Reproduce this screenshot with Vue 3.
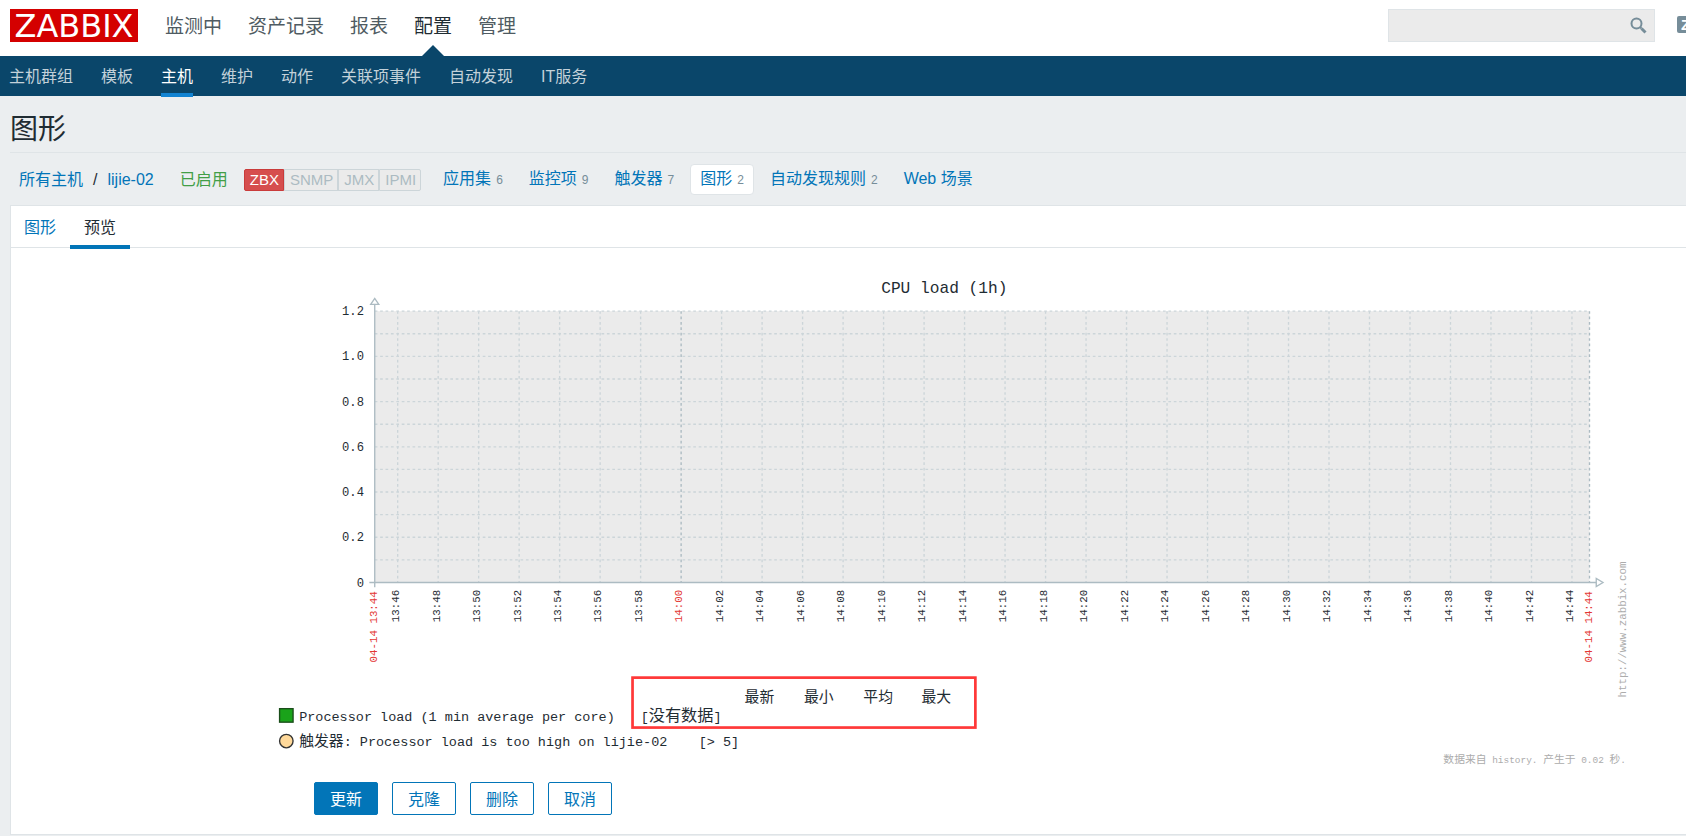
<script setup>
import { ref } from 'vue'

const query = ref('')
const mainMenu = ['监测中', '资产记录', '报表', '配置', '管理']
const subMenu = ['主机群组', '模板', '主机', '维护', '动作', '关联项事件', '自动发现', 'IT服务']
const interfaces = ['ZBX', 'SNMP', 'JMX', 'IPMI']
const hostLinks = [
  { name: '应用集', count: 6 },
  { name: '监控项', count: 9 },
  { name: '触发器', count: 7 },
  { name: '图形', count: 2, active: true },
  { name: '自动发现规则', count: 2 },
  { name: 'Web 场景' }
]
const actions = ['更新', '克隆', '删除', '取消']

const plot = { left: 85, right: 985, top: 30.5, bottom: 231.5 }
const rowStep = (plot.bottom - plot.top) / 12
const rows = Array.from({ length: 12 }, (_, i) => plot.top + i * rowStep)
const yLabels = ['1.2', '1.0', '0.8', '0.6', '0.4', '0.2', '0'].map((text, i) => ({
  text,
  y: plot.top + i * 2 * rowStep + 3
}))
const ticks = Array.from({ length: 30 }, (_, i) => {
  const minutes = 13 * 60 + 46 + i * 2
  const text = `${Math.floor(minutes / 60)}:${String(minutes % 60).padStart(2, '0')}`
  return { text, x: 102 + i * 30, major: minutes % 60 === 0 }
})
const edges = [
  { text: '04-14 13:44', x: plot.left },
  { text: '04-14 14:44', x: plot.right }
]
const columns = [
  { text: '最新', x: 359 },
  { text: '最小', x: 403 },
  { text: '平均', x: 447 },
  { text: '最大', x: 490 }
]
</script>

<template>
  <div class="page">
    <header class="header">
      <a class="logo" href="#">ZABBIX</a>
      <nav class="main-menu" aria-label="主菜单">
        <a v-for="item in mainMenu" :key="item" href="#" :class="{ active: item === '配置' }">{{ item }}</a>
      </nav>
      <form class="search" role="search" @submit.prevent>
        <input v-model="query" type="text" aria-label="搜索" />
        <button type="submit" aria-label="搜索">
          <svg viewBox="0 0 18 18" width="18" height="18">
            <circle cx="7.5" cy="6.5" r="5" />
            <path d="M11 10 L12.5 11.5" />
            <path class="handle" d="M12.5 11.5 L16.5 15.5" />
          </svg>
        </button>
      </form>
      <a class="share" href="#">Z</a>
    </header>

    <nav class="sub-menu" aria-label="配置">
      <a v-for="item in subMenu" :key="item" href="#" :class="{ active: item === '主机' }">{{ item }}</a>
    </nav>

    <main class="content">
      <h1>图形</h1>

      <div class="host-nav">
        <a href="#">所有主机</a>
        <span class="slash">/</span>
        <a href="#">lijie-02</a>
        <a class="enabled" href="#">已启用</a>
        <div class="interfaces">
          <span v-for="name in interfaces" :key="name" :class="{ down: name === 'ZBX' }">{{ name }}</span>
        </div>
        <div class="host-links">
          <a v-for="link in hostLinks" :key="link.name" href="#" :class="{ active: link.active }">
            {{ link.name }}<sup v-if="link.count">{{ link.count }}</sup>
          </a>
        </div>
      </div>

      <section class="panel">
        <div class="tabs">
          <a href="#">图形</a>
          <a href="#" class="active">预览</a>
        </div>

        <div class="preview">
          <svg class="graph" viewBox="0 0 1015 370" role="img" aria-label="CPU load (1h)">
            <text class="title" x="507" y="17" text-anchor="middle">CPU load (1h)</text>

            <rect class="plot" :x="plot.left" :y="plot.top" :width="plot.right - plot.left" :height="plot.bottom - plot.top" />
            <line v-for="y in rows" :key="y" class="grid" :x1="plot.left" :x2="plot.right" :y1="y" :y2="y" />
            <line
              v-for="tick in ticks" :key="tick.text" class="grid" :class="{ major: tick.major }"
              :x1="tick.x" :x2="tick.x" :y1="plot.top" :y2="plot.bottom"
            />
            <line class="grid major" :x1="plot.right" :x2="plot.right" :y1="plot.top" :y2="plot.bottom" />

            <line class="axis" :x1="plot.left" :x2="plot.left" y1="25" y2="235" />
            <line class="axis" x1="81" x2="990" :y1="plot.bottom" :y2="plot.bottom" />
            <path class="arrow" d="M82 25.5 L88 25.5 L85 21 Z" />
            <path class="arrow" d="M990 228.5 L990 234.5 L995 231.5 Z" />

            <text v-for="label in yLabels" :key="label.text" class="value" x="77" :y="label.y" text-anchor="end">{{ label.text }}</text>
            <text
              v-for="tick in ticks" :key="tick.text" class="time" :class="{ red: tick.major }"
              :transform="`translate(${tick.x + 1} 237) rotate(-90)`" text-anchor="end"
            >{{ tick.text }}</text>
            <text
              v-for="edge in edges" :key="edge.text" class="time red"
              :transform="`translate(${edge.x + 2} 238) rotate(-90)`" text-anchor="end"
            >{{ edge.text }}</text>
            <text class="faint" transform="translate(1012 216) rotate(-90)" text-anchor="end">http://www.zabbix.com</text>

            <text v-for="column in columns" :key="column.text" class="han" :x="column.x" y="320">{{ column.text }}</text>
            <rect class="series" x="14.5" y="325" width="10" height="10" />
            <text class="legend" x="29" y="334">Processor load (1 min average per core)</text>
            <text class="legend" x="282" y="334">[<tspan class="han wide">没有数据</tspan>]</text>
            <circle class="trigger" cx="19.5" cy="349" r="5" />
            <text class="legend" x="29" y="353"><tspan class="han">触发器</tspan>: Processor load is too high on lijie-02</text>
            <text class="legend" x="325" y="353">[&gt; 5]</text>
            <rect class="mark" x="276" y="302" width="254" height="37" />

            <text class="faint" x="1012" y="365" text-anchor="end">数据来自<tspan class="tiny">&#160;history.&#160;</tspan>产生于<tspan class="tiny">&#160;0.02&#160;</tspan>秒<tspan class="tiny">.</tspan></text>
          </svg>

          <div class="actions">
            <button v-for="(action, i) in actions" :key="action" type="button" :class="{ primary: i === 0 }">{{ action }}</button>
          </div>
        </div>
      </section>
    </main>
  </div>
</template>

<style>
body {
  margin: 0;
  background: #ebeef0;
}
</style>

<style scoped>
.page {
  font-family: "Liberation Sans", "Noto Sans CJK SC", sans-serif;
  font-size: 16px;
  line-height: 20px;
  color: #1f2c33;
  overflow: hidden;
}
* {
  box-sizing: border-box;
}
a {
  color: #0275b8;
  text-decoration: none;
  white-space: nowrap;
}
.header {
  display: flex;
  height: 56px;
  padding: 9px 0 0 10px;
  background: #fff;
}
.logo {
  flex: none;
  width: 128px;
  height: 33px;
  background: #d40000;
  color: #fff;
  font: 32px/34px "DejaVu Sans", sans-serif;
  text-align: center;
}
.main-menu {
  display: flex;
  gap: 26px;
  margin-left: 27px;
  font-size: 19px;
  line-height: 36px;
}
.main-menu a {
  color: #4f5b62;
}
.main-menu a.active {
  position: relative;
  color: #1f2c33;
}
.main-menu a.active::after {
  content: "";
  position: absolute;
  left: 50%;
  bottom: 0;
  margin-left: -11px;
  border: 11px solid transparent;
  border-top: 0;
  border-bottom-color: #0a466a;
}
.search {
  display: flex;
  flex: none;
  width: 267px;
  height: 33px;
  margin-left: auto;
  border: 1px solid #dfe4e7;
  background: #ebebeb;
}
.search input {
  flex: 1;
  min-width: 0;
  padding: 0 8px;
  border: 0;
  background: none;
  font: inherit;
}
.search button {
  flex: none;
  width: 32px;
  padding: 6px 7px;
  border: 0;
  background: none;
}
.search svg {
  display: block;
  fill: none;
  stroke: #768d99;
  stroke-width: 2;
}
.search .handle {
  stroke-width: 3;
}
.share {
  flex: none;
  width: 17px;
  height: 17px;
  margin: 7px -8px 0 22px;
  padding-left: 4px;
  border-radius: 2px;
  background: #768d99;
  color: #fff;
  font-size: 15px;
  font-weight: bold;
  line-height: 17px;
}
.sub-menu {
  display: flex;
  gap: 28px;
  height: 40px;
  padding-left: 9px;
  background: #0a466a;
  line-height: 42px;
}
.sub-menu a {
  height: 41px;
  color: #c3d1d9;
}
.sub-menu a.active {
  position: relative;
  border-bottom: 4px solid #1283d2;
  color: #fff;
}
.content {
  padding-left: 10px;
}
h1 {
  margin: 0;
  padding: 19px 0 7px;
  border-bottom: 1px solid #dfe4e7;
  font-size: 28px;
  font-weight: normal;
  line-height: 30px;
}
.host-nav {
  display: flex;
  align-items: center;
  height: 52px;
  padding: 1px 0 0 9px;
}
.slash {
  margin: 0 10px;
}
.enabled {
  margin: 0 16px 0 26px;
  color: #429e47;
}
.interfaces {
  display: flex;
}
.interfaces span {
  padding: 0 4px 0 5px;
  border: 1px solid #ccd5d9;
  background: #ebebeb;
  color: #acbbc2;
  font-size: 15px;
}
.interfaces span:first-child {
  border-radius: 2px 0 0 2px;
}
.interfaces span:last-child {
  border-radius: 0 2px 2px 0;
}
.interfaces .down {
  border-color: #c93b3b;
  background: #d64e4e;
  color: #fff;
}
.host-links {
  display: flex;
  gap: 6px;
  margin-left: 12px;
}
.host-links a {
  padding: 4px 9px;
  border: 1px solid transparent;
  border-radius: 4px;
}
.host-links a.active {
  border-color: #dfe4e7;
  background: #fff;
}
sup {
  margin-left: 5px;
  color: #768d99;
  font-size: 12px;
  vertical-align: baseline;
}
.panel {
  border: 1px solid #dfe4e7;
  border-right: 0;
  background: #fff;
}
.tabs {
  display: flex;
  height: 42px;
  margin-left: -1px;
  border-bottom: 1px solid #dfe4e7;
}
.tabs a {
  height: 43px;
  padding: 0 14px;
  line-height: 43px;
}
.tabs a.active {
  border-bottom: 4px solid #0275b8;
  color: #1f2c33;
}
.preview {
  padding: 22px 56px 19px 249px;
}
.graph {
  display: block;
  width: 100%;
  font-family: "Liberation Mono", "Noto Sans CJK SC", monospace;
  fill: #1f2c33;
}
.title {
  font-size: 12px;
}
.plot {
  fill: #ebebeb;
}
.grid {
  stroke: #ccd5d9;
  stroke-dasharray: 2 2;
}
.grid.major {
  stroke: #acbbc2;
}
.axis,
.arrow {
  fill: #fff;
  stroke: #acbbc2;
}
.value {
  font-size: 9px;
}
.time {
  font-size: 8px;
}
.red {
  fill: #e33734;
}
.faint {
  fill: #acacac;
  font-size: 8px;
}
.tiny {
  font-size: 7px;
}
.legend {
  font-size: 10px;
}
.han {
  font-size: 11px;
}
.wide {
  font-size: 12px;
}
.series {
  fill: #1aa31a;
  stroke: #1a4d1a;
}
.trigger {
  fill: #ffd99a;
  stroke: #333;
}
.mark {
  fill: none;
  stroke: #ff3838;
  stroke-width: 2;
}
.actions {
  display: flex;
  gap: 14px;
  margin: 13px 0 0 54px;
}
.actions button {
  height: 33px;
  padding: 2px 15px 0;
  border: 1px solid #0275b8;
  border-radius: 2px;
  background: #fff;
  color: #0275b8;
  font: inherit;
}
.actions .primary {
  background: #0275b8;
  color: #fff;
}
</style>
